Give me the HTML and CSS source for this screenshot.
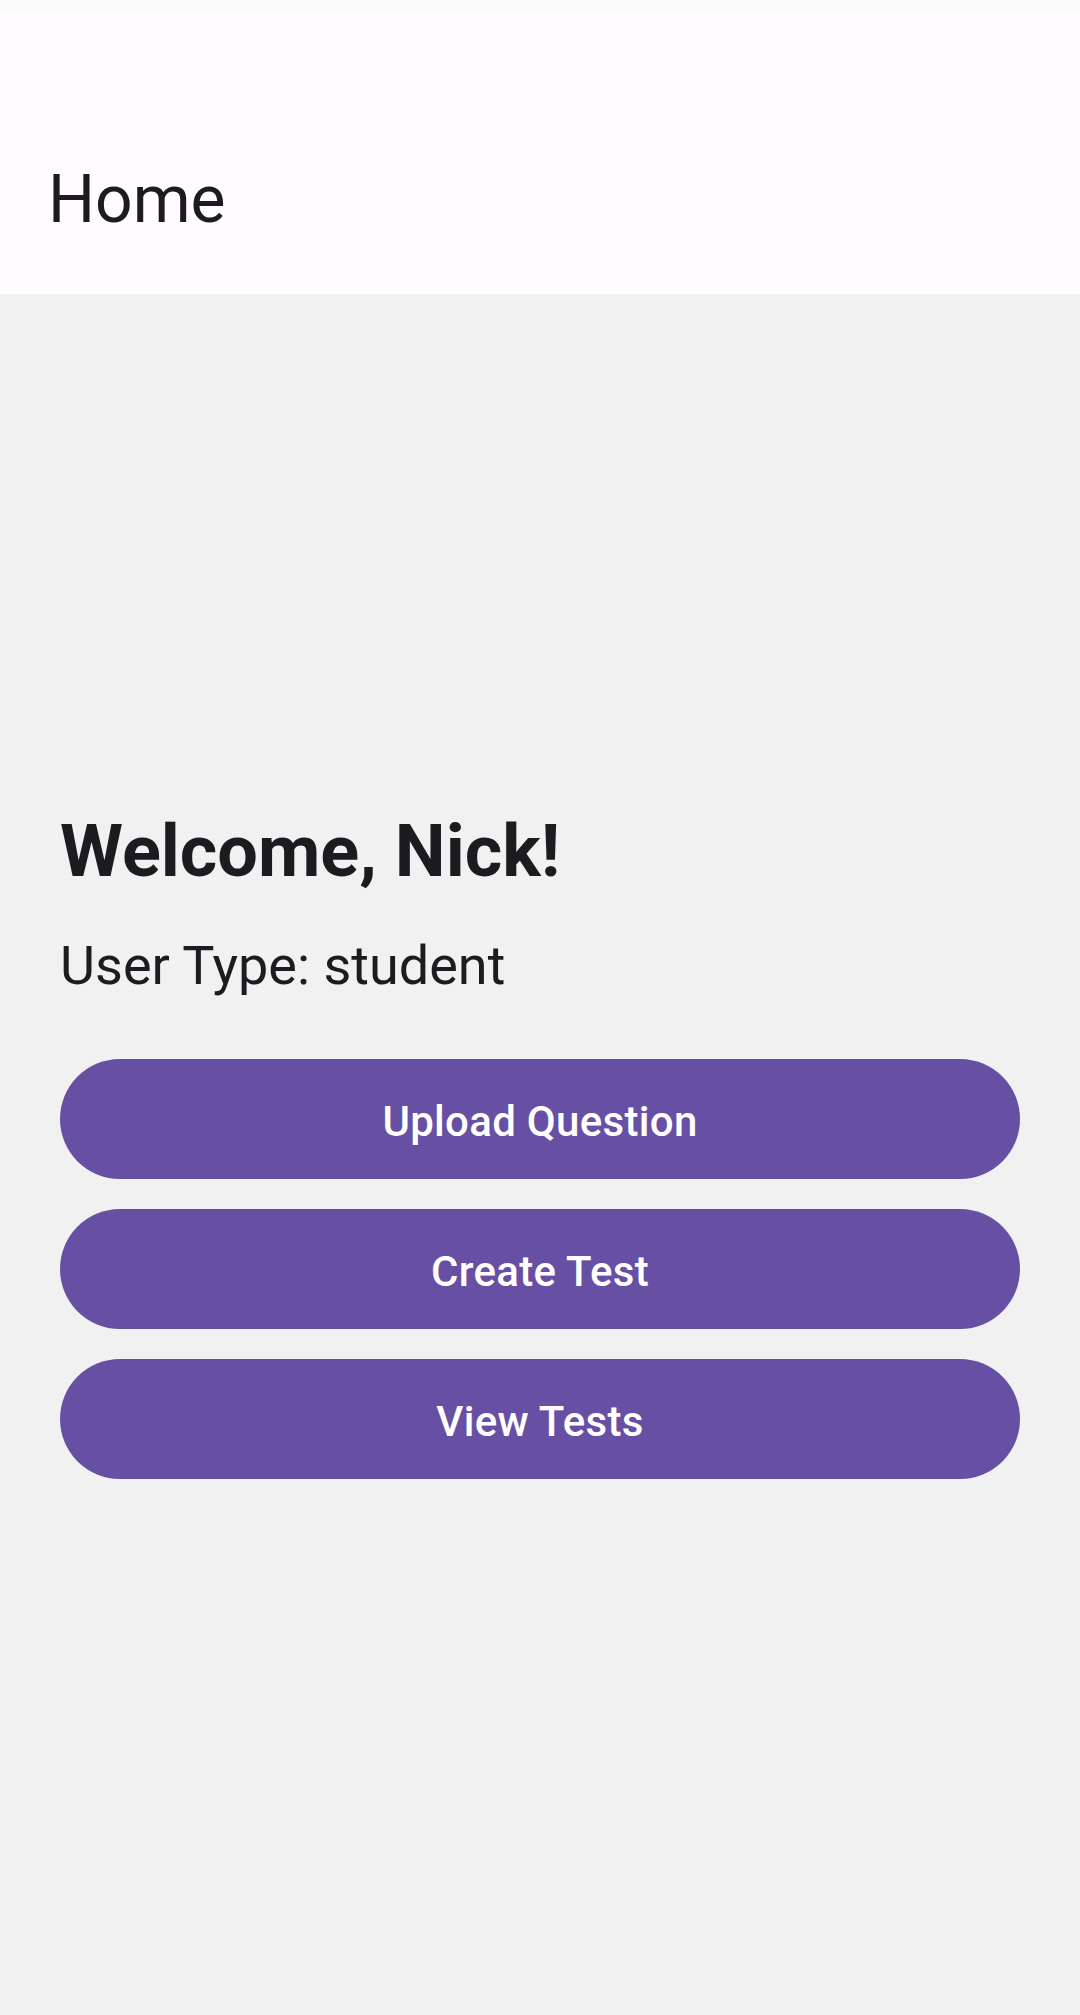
FILE: index.html
```html
<!DOCTYPE html>
<html lang="en">
<head>
<meta charset="utf-8">
<title>Home</title>
<link rel="stylesheet" href="styles.css">
</head>
<body>
<div class="screen">
  <div class="status"></div>
  <header class="appbar">
    <h1 class="appbar-title">Home</h1>
  </header>
  <main class="content">
    <h2 class="welcome">Welcome, Nick!</h2>
    <p class="usertype">User Type: student</p>
    <div class="actions">
      <button class="btn">Upload Question</button>
      <button class="btn">Create Test</button>
      <button class="btn">View Tests</button>
    </div>
  </main>
</div>
</body>
</html>
```
FILE: styles.css
```css
* { box-sizing: border-box; }
html, body {
  margin: 0;
  padding: 0;
  height: 100%;
}
body {
  font-family: Roboto, "Noto Sans", sans-serif;
  color: #1c1b1f;
  background: #f1f1f1;
}
.screen {
  display: flex;
  flex-direction: column;
  height: 2015px;
}
.status {
  height: 14px;
  background: #fafafa;
}
.appbar {
  height: 280px;
  background: #fffbfe;
  display: flex;
  align-items: flex-end;
  padding: 0 48px 61px;
}
.appbar-title {
  margin: 0;
  font-size: 66px;
  font-weight: 400;
  line-height: 1;
}
.content {
  flex: 1;
  background: #f1f1f1;
  padding: 515px 60px 0;
  display: flex;
  flex-direction: column;
}
.welcome {
  margin: 0;
  font-size: 72px;
  font-weight: 700;
  line-height: 86px;
}
.usertype {
  margin: 39px 0 0;
  font-size: 54px;
  font-weight: 400;
  line-height: 64px;
}
.actions {
  margin-top: 61px;
  display: flex;
  flex-direction: column;
  gap: 30px;
}
.btn {
  height: 120px;
  width: 100%;
  border: 0;
  border-radius: 60px;
  padding: 5px 0 0;
  background: #6750a4;
  color: #ffffff;
  font-family: Roboto, "Noto Sans", sans-serif;
  font-size: 42px;
  font-weight: 500;
  letter-spacing: 0.3px;
}
```
